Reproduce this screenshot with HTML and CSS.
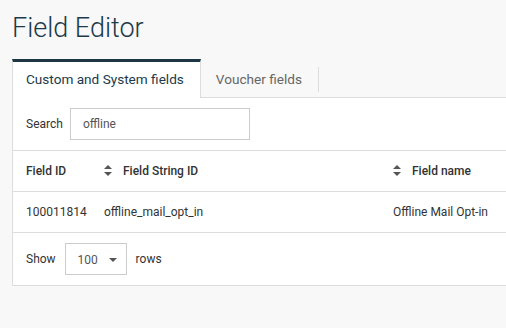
FILE: index.html
```html
<!DOCTYPE html>
<html lang="en">
<head>
    <meta charset="UTF-8">
    <meta name="viewport" content="width=device-width, initial-scale=1.0">
    <title>Field Editor</title>
    <link rel="stylesheet" href="styles.css">
</head>
<body>

<div class="page">
    <h1 class="page-title">Field Editor</h1>

    <ul class="tabs">
        <li class="tab active">Custom and System fields</li>
        <li class="tab">Voucher fields</li>
    </ul>

    <div class="panel">
        <div class="search-row">
            <label for="search">Search</label>
            <input type="text" id="search" value="offline">
        </div>

        <table class="fields">
            <colgroup>
                <col class="col-id">
                <col class="col-string">
                <col>
            </colgroup>
            <thead>
                <tr>
                    <th>Field ID</th>
                    <th>
                        <svg class="sort" width="8" height="11" viewBox="0 0 8 11"><path d="M4 0 L8 4 H0 Z M0 7 H8 L4 11 Z" fill="#555"/></svg>
                        Field String ID
                    </th>
                    <th>
                        <svg class="sort" width="8" height="11" viewBox="0 0 8 11"><path d="M4 0 L8 4 H0 Z M0 7 H8 L4 11 Z" fill="#555"/></svg>
                        Field name
                    </th>
                </tr>
            </thead>
            <tbody>
                <tr>
                    <td>100011814</td>
                    <td>offline_mail_opt_in</td>
                    <td>Offline Mail Opt-in</td>
                </tr>
            </tbody>
        </table>

        <div class="length-row">
            <span>Show</span>
            <div class="select">
                <span>100</span>
                <svg width="8" height="4" viewBox="0 0 8 4"><path d="M0 0 H8 L4 4 Z" fill="#555"/></svg>
            </div>
            <span>rows</span>
        </div>
    </div>
</div>

</body>
</html>
```

FILE: styles.css
```css
body {
    margin: 0;
    background-color: #f8f8f8;
    font-family: Roboto, "Liberation Sans", Arial, sans-serif;
    color: #333;
    overflow: hidden;
}

.page {
    padding-left: 12px;
    width: 560px;
}

.page-title {
    margin: 0 0 14px 0;
    padding-top: 11px;
    font-size: 27px;
    line-height: 34px;
    font-weight: 300;
    color: #1c3a4a;
}

.tabs {
    list-style: none;
    margin: 0;
    padding: 0;
    display: flex;
    border-bottom: 1px solid #ddd;
}

.tab {
    position: relative;
    height: 35px;
    line-height: 35px;
    padding: 0 17px 0 15px;
    border-top: 3px solid transparent;
    font-size: 13.6px;
    color: #666;
}

.tab + .tab::after {
    content: "";
    position: absolute;
    right: 0;
    top: 5px;
    height: 25px;
    border-right: 1px solid #ddd;
}

.tab.active {
    background-color: #fff;
    color: #1c3a4a;
    border-top-color: #1c3644;
    border-left: 1px solid #ddd;
    border-right: 1px solid #ddd;
    margin-bottom: -1px;
    height: 36px;
    line-height: 35px;
    padding: 0 16px 0 13px;
}

.panel {
    background-color: #fff;
    border: 1px solid #ddd;
    border-top: none;
}

.search-row {
    display: flex;
    align-items: center;
    padding: 10px 13px;
    border-bottom: 1px solid #ddd;
    font-size: 12px;
}

.search-row label {
    margin-right: 7px;
}

.search-row input {
    width: 180px;
    height: 32px;
    box-sizing: border-box;
    border: 1px solid #ccc;
    padding: 0 12px;
    font-family: inherit;
    font-size: 12px;
    color: #555;
}

.fields {
    width: 100%;
    table-layout: fixed;
    border-collapse: collapse;
    font-size: 12px;
}

.col-id {
    width: 78px;
}

.col-string {
    width: 289px;
}

.fields th,
.fields td {
    height: 40px;
    padding: 0 0 0 13px;
    text-align: left;
    border-bottom: 1px solid #ddd;
    white-space: nowrap;
}

.fields th {
    font-weight: 500;
}

.sort {
    vertical-align: -1px;
    margin-right: 8px;
}

.length-row {
    display: flex;
    align-items: center;
    padding: 10px 13px;
    font-size: 12px;
}

.select {
    display: flex;
    align-items: center;
    width: 62px;
    height: 32px;
    box-sizing: border-box;
    border: 1px solid #ccc;
    margin: 0 9px;
    padding: 1px 0 0 12px;
    color: #555;
}

.select span {
    margin-right: 11px;
}
```
